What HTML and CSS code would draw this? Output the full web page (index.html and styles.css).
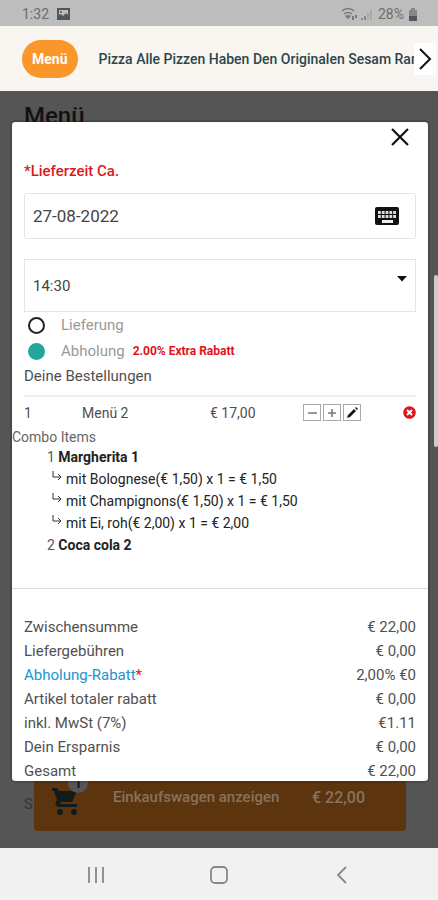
FILE: index.html
```html
<!DOCTYPE html>
<html lang="de">
<head>
<meta charset="utf-8">
<meta name="viewport" content="width=device-width, initial-scale=1">
<title>Warenkorb</title>
<link rel="stylesheet" href="styles.css">
</head>
<body>
<div class="status">
  <span class="clock">1:32</span>
  <svg class="photo" viewBox="0 0 13 12" width="13" height="12"><path fill="#555" fill-rule="evenodd" d="M0 0h13v12H0zM2 2v5l2-1 2 2 3-3 2 2V2z"/><circle cx="4" cy="4" r="1" fill="#555"/></svg>
  <svg class="signal" viewBox="0 0 32 14" width="32" height="14"><g fill="none" stroke="#777" stroke-width="1.5"><path d="M1 4q6-5 12 0M3 7q4-3 8 0"/></g><path fill="#777" d="M4 9q3-2 6 0l-3 3zM11 13V9h2v4zM14 11V8h2v3z"/><path fill="#888" d="M20 13v-2h2v2zM23 13v-4h2v4z"/><path fill="#aaa" d="M26 13V6h2v7zM29 13V3h2v10z"/></svg>
  <span class="percent">28%</span>
  <svg viewBox="0 0 10 13" width="10" height="13"><path fill="#888" d="M3 0h4v2h2v6H1V2h2z"/><path fill="#555" d="M1 8h8v5H1z"/></svg>
</div>
<nav class="tabs">
  <a class="tab tab-active" href="#menu">Menü</a>
  <a class="tab tab-next" href="#pizza">Pizza Alle Pizzen Haben Den Originalen Sesam Rand</a>
  <button class="scroll-next" type="button" aria-label="Weiter"><svg viewBox="0 0 14 24" width="14" height="24"><path d="M2 2l10 10L2 22" fill="none" stroke="#111" stroke-width="2"/></svg></button>
</nav>
<main class="page">
  <h1 class="page-title" id="menu">Menü</h1>
  <div class="page-bottom">
    <span class="behind">S</span>
    <a class="cart-bar" href="#cart">
      <span class="cart-icon"><svg viewBox="0 0 26 27" width="26" height="27"><path fill="#111b1b" d="M0 0h5l2 3h18l-5 11H9l-1 2h17v3H7q-5-1-3-5l1-2L2 3H0z"/><circle cx="8" cy="24" r="3" fill="#111b1b"/><circle cx="22" cy="24" r="3" fill="#111b1b"/></svg><span class="badge">1</span></span>
      <span class="cart-text">Einkaufswagen anzeigen</span>
      <span class="cart-sum">€ 22,00</span>
    </a>
  </div>
  <div class="thumb"></div>
  <div class="overlay">
    <section class="modal" role="dialog" aria-label="Bestellung">
      <div class="modal-head"><button class="close" type="button" aria-label="Schließen"><svg viewBox="0 0 20 20" width="20" height="20"><path d="M2 2l16 16M18 2L2 18" stroke="#111" stroke-width="2.2"/></svg></button></div>
      <form class="form">
        <label class="required" for="date">*Lieferzeit Ca.</label>
        <div class="field date-field">
          <input id="date" type="text" value="27-08-2022">
          <svg viewBox="0 0 24 18" width="24" height="18"><rect width="24" height="18" rx="2" fill="#111"/><path stroke="#ddd" stroke-width="2.8" stroke-dasharray="2.8 1" d="M3 5.500h18M3 9.500h18"/><path stroke="#eee" stroke-width="3" d="M7 14.500h11"/></svg>
        </div>
        <div class="field time-field">
          <select aria-label="Uhrzeit"><option>14:30</option></select>
          <svg viewBox="0 0 10 6" width="10" height="6"><path d="M0 0h10L5 5.500z" fill="#111"/></svg>
        </div>
        <label class="choice"><input type="radio" name="mode"><span>Lieferung</span></label>
        <label class="choice"><input type="radio" name="mode" checked><span>Abholung</span><strong>2.00% Extra Rabatt</strong></label>
      </form>
      <h2 class="orders-title">Deine Bestellungen</h2>
      <div class="order">
        <span>1</span><span>Menü 2</span><span>€ 17,00</span>
        <span class="tools">
          <button type="button" aria-label="Weniger"><svg viewBox="0 0 14 14" width="14" height="14"><path d="M3 7h9" stroke="#777" stroke-width="1.500"/></svg></button>
          <button type="button" aria-label="Mehr"><svg viewBox="0 0 14 14" width="14" height="14"><path d="M3 7h8M7 3v8" stroke="#777" stroke-width="1.500"/></svg></button>
          <button type="button" aria-label="Bearbeiten"><svg viewBox="0 0 14 14" width="14" height="14"><path d="M2 12l1-3 6-6 2 2-6 6zM10 2l1-1 2 2-1 1z" fill="#111"/></svg></button>
        </span>
        <button class="remove" type="button" aria-label="Entfernen"><svg viewBox="0 0 13 13" width="13" height="13"><circle cx="6.500" cy="6.500" r="6.300" fill="#e3121b"/><path d="M4 4l5 5M9 4L4 9" stroke="#fff" stroke-width="2"/></svg></button>
      </div>
      <p class="combo-title">Combo Items</p>
      <ul class="combo">
        <li><span class="qty">1</span> <b>Margherita 1</b></li>
        <li class="extra"><svg viewBox="0 0 10 10" width="10" height="10"><path d="M1 0v6h8M6 3l3 3-3 3" fill="none" stroke="#333"/></svg>mit Bolognese(€ 1,50) x 1 = € 1,50</li>
        <li class="extra"><svg viewBox="0 0 10 10" width="10" height="10"><path d="M1 0v6h8M6 3l3 3-3 3" fill="none" stroke="#333"/></svg>mit Champignons(€ 1,50) x 1 = € 1,50</li>
        <li class="extra"><svg viewBox="0 0 10 10" width="10" height="10"><path d="M1 0v6h8M6 3l3 3-3 3" fill="none" stroke="#333"/></svg>mit Ei, roh(€ 2,00) x 1 = € 2,00</li>
        <li><span class="qty">2</span> <b>Coca cola 2</b></li>
      </ul>
      <div class="totals">
        <table>
          <tr><th scope="row">Zwischensumme</th><td>€ 22,00</td></tr>
          <tr><th scope="row">Liefergebühren</th><td>€ 0,00</td></tr>
          <tr><th scope="row" class="discount">Abholung-Rabatt<span class="star">*</span></th><td>2,00% €0</td></tr>
          <tr><th scope="row">Artikel totaler rabatt</th><td>€ 0,00</td></tr>
          <tr><th scope="row">inkl. MwSt (7%)</th><td>€1.11</td></tr>
          <tr><th scope="row">Dein Ersparnis</th><td>€ 0,00</td></tr>
          <tr><th scope="row">Gesamt</th><td>€ 22,00</td></tr>
        </table>
      </div>
    </section>
  </div>
</main>
<footer class="system">
  <button type="button" aria-label="Letzte Apps"><svg viewBox="0 0 18 18" width="18" height="18"><path d="M2 1v16M9 1v16M16 1v16" stroke="#888" stroke-width="1.800"/></svg></button>
  <button type="button" aria-label="Start"><svg viewBox="0 0 18 18" width="18" height="18"><rect x="1" y="1" width="16" height="16" rx="4" fill="none" stroke="#888" stroke-width="1.800"/></svg></button>
  <button type="button" aria-label="Zurück"><svg viewBox="0 0 18 18" width="18" height="18"><path d="M13 1L5 9l8 8" fill="none" stroke="#888" stroke-width="1.800"/></svg></button>
</footer>
</body>
</html>
```
FILE: styles.css
```css
* { box-sizing: border-box; }

body {
  margin: 0;
  min-height: 100vh;
  display: flex;
  flex-direction: column;
  font-family: Roboto, "Liberation Sans", sans-serif;
  font-size: 15px;
  line-height: 20px;
  color: #505050;
}

button {
  padding: 0;
  border: 0;
  background: none;
  display: flex;
  align-items: center;
  justify-content: center;
}

svg { display: block; flex: none; }
p, h1, h2, ul { margin: 0; padding: 0; }

.status {
  display: flex;
  align-items: center;
  height: 26px;
  padding: 2px 20px 0 22px;
  background: #bdbdbd;
  color: #6c6c6c;
  font-size: 14px;
}
.photo { margin-left: 8px; }
.signal { margin-left: auto; }
.percent { margin: 0 4px 0 5px; }

.tabs {
  display: flex;
  align-items: center;
  height: 65px;
  padding-left: 22px;
  background: #f9f5f1;
  font-size: 14px;
}
.tab { text-decoration: none; font-weight: 500; white-space: nowrap; }
.tab-active {
  padding: 9px 10px;
  border-radius: 19px;
  background: #fa962a;
  color: #fff;
  font-weight: 700;
}
.tab-next {
  flex: 1;
  min-width: 0;
  margin-left: 21px;
  overflow: hidden;
  color: #2c464a;
}
.scroll-next { width: 22px; height: 32px; margin-right: 2px; background: #fff; }

.page {
  position: relative;
  flex: 1;
  display: flex;
  flex-direction: column;
  justify-content: space-between;
  background: #555;
}
.page-title {
  padding: 11px 24px;
  font-size: 24px;
  line-height: 28px;
  font-weight: 500;
  color: #111;
}
.page-bottom { display: flex; padding: 0 32px 17px 24px; }
.behind { width: 10px; overflow: hidden; padding-top: 15px; color: #333; }
.cart-bar {
  flex: 1;
  display: flex;
  height: 52px;
  padding: 0 41px 0 18px;
  border-radius: 0 0 4px 4px;
  background: #5c350f;
  color: #86735f;
  font-weight: 500;
  text-decoration: none;
}
.cart-icon { position: relative; padding-top: 9px; }
.badge {
  position: absolute;
  top: -6px;
  left: 16px;
  width: 20px;
  height: 20px;
  border-radius: 10px;
  background: #555;
  color: #111;
  text-align: center;
}
.cart-text { margin: 8px auto 0 35px; }
.cart-sum { padding-top: 9px; font-size: 16px; }

.thumb {
  position: absolute;
  top: 184px;
  right: 0;
  width: 4px;
  height: 172px;
  border-radius: 2px;
  background: #ccc;
}
.overlay { position: absolute; inset: 31px 10px 67px 12px; }
.modal {
  height: 100%;
  overflow: hidden;
  border-radius: 3px;
  background: #fff;
  box-shadow: 0 0 3px #222;
}
.modal-head { display: flex; justify-content: flex-end; padding: 5px 18px 0 0; }
.form { padding: 14px 12px 0; }
.required { display: block; margin-bottom: 12px; font-weight: 500; color: #d91a22; }
.field {
  display: flex;
  align-items: center;
  border: 1px solid #e5e5e5;
}
.field input,
.field select {
  flex: 1;
  min-width: 0;
  padding: 0;
  border: 0;
  outline: 0;
  background: none;
  appearance: none;
  font-family: inherit;
  color: #444;
}
.date-field { height: 46px; padding: 0 16px 0 8px; border-radius: 3px; }
.date-field input { font-size: 17px; }
.time-field { height: 53px; margin: 20px 0 0; padding: 0 8px; }
.time-field select { font-size: 15px; }
.time-field svg { margin-bottom: 14px; }

.choice { display: flex; align-items: center; height: 26px; color: #999; }
.choice input {
  width: 17px;
  height: 17px;
  margin: 0 16px 0 4px;
  border: 2px solid #222;
  border-radius: 50%;
  appearance: none;
}
.choice input:checked { border-color: #26a69a; background: #26a69a; }
.choice strong { margin-left: 8px; font-size: 12px; color: #e3121b; }

.orders-title { padding: 0 12px; line-height: 24px; font-size: 15px; font-weight: 400; }
.order {
  display: grid;
  grid-template-columns: 58px 128px 93px 1fr auto;
  align-items: center;
  height: 35px;
  margin: 7px 12px 0;
  padding-bottom: 2px;
  border-top: 2px solid #eee;
  font-size: 14px;
}
.tools { display: flex; gap: 2px; }
.tools button { width: 18px; height: 17px; border: 1px solid #aaa; }
.combo-title { font-size: 14px; line-height: 14px; color: #666; }
.combo { padding: 2px 35px 32px; list-style: none; font-size: 14px; line-height: 22px; color: #222; }
.combo b { font-weight: 700; }
.qty { color: #555; }
.extra { display: flex; gap: 4px; padding-left: 5px; }
.extra svg { margin-top: 3px; }

.totals { padding: 26px 12px 0; border-top: 1px solid #ddd; }
.totals table { width: 100%; border-collapse: collapse; }
.totals th, .totals td { padding: 0; line-height: 24px; font-weight: 400; text-align: left; }
.totals td { text-align: right; }
.totals .discount { color: #2393d3; }
.star { color: #e3121b; }

.system {
  display: flex;
  align-items: center;
  justify-content: space-between;
  height: 52px;
  padding: 2px 87px 0;
  background: #f1f1f1;
}
```
